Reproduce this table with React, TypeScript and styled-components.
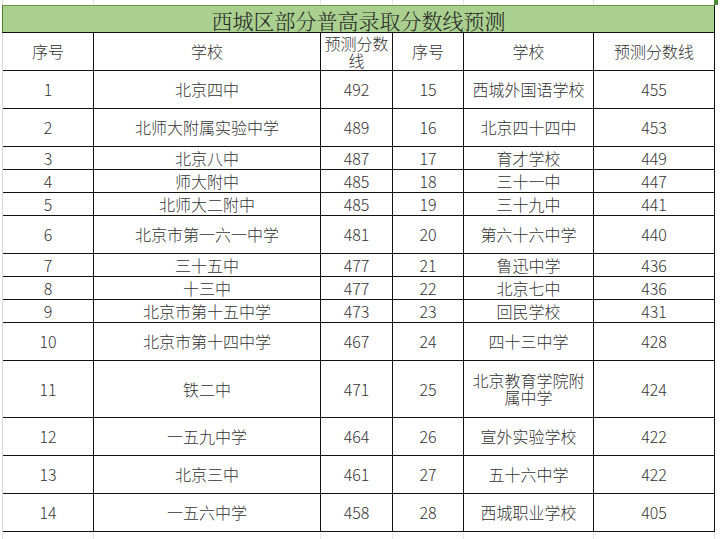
import React from "react";
import styled, { createGlobalStyle } from "styled-components";

const GlobalStyle = createGlobalStyle`
  html, body { margin: 0; padding: 0; background: #ffffff; }
  * { box-sizing: border-box; }
`;

const COLS = "91px 227px 72px 71px 130px 121px";

const Sheet = styled.div`
  position: relative;
  width: 720px;
  height: 539px;
  overflow: hidden;
  padding-left: 2px;
  background: #ffffff;
  font-family: "Noto Sans CJK SC", "Noto Sans", sans-serif;
  color: #333333;
`;

const Table = styled.div`
  width: 713px;
  display: flex;
  flex-direction: column;
`;

const GhostRow = styled.div<{ $h: number }>`
  display: grid;
  grid-template-columns: ${COLS};
  height: ${(p) => p.$h}px;
  border-left: 1px solid #dcdcdc;
`;

const GhostCell = styled.div`
  border-right: 1px solid #e4e4e4;
`;

const TitleBar = styled.div`
  height: 28px;
  background: #a9d08e;
  border-top: 1px solid #6a9a4a;
  border-left: 1px solid #4f7f35;
  border-right: 1px solid #111;
  border-bottom: 1px solid #111;
  display: flex;
  justify-content: center;
  padding-top: 4px;
  font-family: "Noto Serif CJK SC", "Noto Sans CJK SC", serif;
  font-size: 21px;
  font-weight: 300;
  line-height: 21px;
  color: #2a2a2a;
`;

const Row = styled.div<{ $h: number }>`
  display: grid;
  grid-template-columns: ${COLS};
  height: ${(p) => p.$h}px;
  border-left: 1px solid #d6d6d6;
`;

const Cell = styled.div`
  border-right: 1px solid #111;
  border-bottom: 1px solid #111;
  display: flex;
  align-items: center;
  justify-content: center;
  text-align: center;
  padding: 0 3px;
  font-size: 16px;
  font-weight: 300;
  line-height: 17px;
  overflow: hidden;
`;

const Handle = styled.div`
  position: absolute;
  top: 0;
  left: 714px;
  width: 4px;
  height: 5px;
  background: #4f8a3a;
`;

type Rec = { h: number; a: [string, string, string]; b: [string, string, string] };

const rows: Rec[] = [
  { h: 38, a: ["1", "北京四中", "492"], b: ["15", "西城外国语学校", "455"] },
  { h: 38, a: ["2", "北师大附属实验中学", "489"], b: ["16", "北京四十四中", "453"] },
  { h: 23, a: ["3", "北京八中", "487"], b: ["17", "育才学校", "449"] },
  { h: 23, a: ["4", "师大附中", "485"], b: ["18", "三十一中", "447"] },
  { h: 23, a: ["5", "北师大二附中", "485"], b: ["19", "三十九中", "441"] },
  { h: 38, a: ["6", "北京市第一六一中学", "481"], b: ["20", "第六十六中学", "440"] },
  { h: 23, a: ["7", "三十五中", "477"], b: ["21", "鲁迅中学", "436"] },
  { h: 23, a: ["8", "十三中", "477"], b: ["22", "北京七中", "436"] },
  { h: 23, a: ["9", "北京市第十五中学", "473"], b: ["23", "回民学校", "431"] },
  { h: 38, a: ["10", "北京市第十四中学", "467"], b: ["24", "四十三中学", "428"] },
  { h: 57, a: ["11", "铁二中", "471"], b: ["25", "北京教育学院附属中学", "424"] },
  { h: 38, a: ["12", "一五九中学", "464"], b: ["26", "宣外实验学校", "422"] },
  { h: 38, a: ["13", "北京三中", "461"], b: ["27", "五十六中学", "422"] },
  { h: 38, a: ["14", "一五六中学", "458"], b: ["28", "西城职业学校", "405"] },
];

const header = ["序号", "学校", "预测分数线", "序号", "学校", "预测分数线"];

export default function App() {
  return (
    <>
      <GlobalStyle />
      <Sheet>
        <Table>
          <GhostRow $h={5}>
            {header.map((_, i) => (
              <GhostCell key={i} />
            ))}
          </GhostRow>
          <TitleBar>西城区部分普高录取分数线预测</TitleBar>
          <Row $h={38}>
            {header.map((t, i) => (
              <Cell key={i}>{t}</Cell>
            ))}
          </Row>
          {rows.map((r, i) => (
            <Row key={i} $h={r.h}>
              {[...r.a, ...r.b].map((t, j) => (
                <Cell key={j}>{t}</Cell>
              ))}
            </Row>
          ))}
          <GhostRow $h={8}>
            {header.map((_, i) => (
              <GhostCell key={i} />
            ))}
          </GhostRow>
        </Table>
        <Handle />
      </Sheet>
    </>
  );
}
